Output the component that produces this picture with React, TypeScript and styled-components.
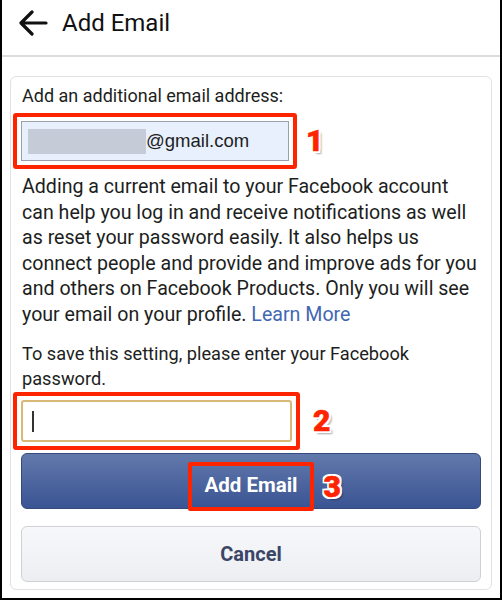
import React from "react";
import styled, { createGlobalStyle } from "styled-components";

const GlobalStyle = createGlobalStyle`
  html, body {
    margin: 0;
    padding: 0;
    background: #fff;
  }
  body {
    font-family: Roboto, "Liberation Sans", sans-serif;
  }
`;

const Frame = styled.div`
  width: 502px;
  height: 600px;
  box-sizing: border-box;
  border: 2px solid #000;
  border-top: none;
  display: flex;
  flex-direction: column;
  overflow: hidden;
`;

const Header = styled.div`
  height: 57px;
  flex-shrink: 0;
  display: flex;
  align-items: center;
  gap: 14px;
  padding-left: 16px;
  border-bottom: 2px solid #dcdcdc;
  box-sizing: border-box;
`;

const Title = styled.div`
  font-size: 24px;
  color: #111;
  padding-bottom: 10px;
`;

const Body = styled.div`
  padding: 19px 8px 10px 8px;
`;

const Card = styled.div`
  border: 1px solid #e2e2e2;
  border-radius: 6px;
  padding: 8px 10px 7px 11px;
  display: flex;
  flex-direction: column;
`;

const Label = styled.div`
  font-size: 18px;
  color: #1c1e21;
  line-height: 22px;
`;

const Row = styled.div<{ $top: number }>`
  display: flex;
  align-items: center;
  margin-top: ${(p) => p.$top}px;
`;

const Highlight = styled.div<{ $w: number; $h: number }>`
  width: ${(p) => p.$w}px;
  height: ${(p) => p.$h}px;
  box-sizing: border-box;
  border: 4px solid #ff2400;
  border-radius: 3px;
  margin-left: -9px;
  padding: 4px;
  display: flex;
`;

const EmailField = styled.div`
  flex: 1;
  background: #e8f0fe;
  border: 1px solid #9aa0a8;
  display: flex;
  align-items: center;
  padding-left: 6px;
  font-family: "Liberation Sans", Arial, sans-serif;
  font-size: 18.5px;
  color: #1c1e21;
`;

const Redacted = styled.span`
  display: inline-block;
  width: 118px;
  height: 25px;
  background: #c6ccd7;
`;

const PassField = styled.div`
  flex: 1;
  border: 2px solid #d8b877;
  border-radius: 3px;
  display: flex;
  align-items: center;
  padding-left: 9px;
`;

const Caret = styled.span`
  width: 2px;
  height: 21px;
  background: #333;
`;

const Step = styled.span<{ $left: number }>`
  margin-left: ${(p) => p.$left}px;
  font-family: Roboto, "Liberation Sans", sans-serif;
  font-weight: 900;
  font-size: 30px;
  line-height: 30px;
  color: #ff2400;
  -webkit-text-stroke: 0.6px #ff2400;
  text-shadow: 2px 0 0 #fff, -2px 0 0 #fff, 0 2px 0 #fff, 0 -2px 0 #fff,
    2px 2px 0 #fff, -2px -2px 0 #fff, 2px -2px 0 #fff, -2px 2px 0 #fff,
    3px 3px 2px rgba(0, 0, 0, 0.35);
`;

const OverStep = styled(Step)`
  position: absolute;
  left: 100%;
  top: 6px;
`;

const Paragraph = styled.p`
  margin: 5px 0 0 0;
  font-size: 19.6px;
  line-height: 25.5px;
  color: #1c1e21;
`;

const Link = styled.a`
  color: #4267b2;
  text-decoration: none;
`;

const Small = styled.p`
  margin: 14px 0 0 0;
  font-size: 18.2px;
  line-height: 25px;
  color: #1c1e21;
`;

const Button = styled.div<{ $primary?: boolean }>`
  margin: ${(p) => (p.$primary ? "3px" : "17px")} 0 0 -1px;
  height: 56px;
  box-sizing: border-box;
  border-radius: 6px;
  display: flex;
  justify-content: center;
  font-weight: 700;
  ${(p) =>
    p.$primary
      ? `
    align-items: flex-start;
    padding-top: 8px;
    font-size: 20.5px;
    background: linear-gradient(#6279ab, #3a5494);
    border: 1px solid #34497e;
    color: #fff;
  `
      : `
    align-items: center;
    font-size: 20px;
    background: linear-gradient(#f7f8fa, #eceef2);
    border: 1px solid #cfd1d5;
    color: #3b4566;
  `}
`;

const ButtonMark = styled.div`
  position: relative;
  border: 4px solid #ff2400;
  border-radius: 2px;
  height: 49px;
  box-sizing: border-box;
  padding: 0 12px 4px 12px;
  display: flex;
  align-items: center;
`;

const BackArrow = () => (
  <svg width="30" height="26" viewBox="0 0 30 26" style={{ marginBottom: 10 }}>
    <path
      d="M28 13H4M14 2L3 13l11 11"
      fill="none"
      stroke="#111"
      strokeWidth="3.2"
      strokeLinecap="round"
      strokeLinejoin="round"
    />
  </svg>
);

export default function App() {
  return (
    <>
      <GlobalStyle />
      <Frame>
        <Header>
          <BackArrow />
          <Title>Add Email</Title>
        </Header>
        <Body>
          <Card>
            <Label>Add an additional email address:</Label>
            <Row $top={6}>
              <Highlight $w={284} $h={56}>
                <EmailField>
                  <Redacted />
                  @gmail.com
                </EmailField>
              </Highlight>
              <Step $left={9}>1</Step>
            </Row>
            <Paragraph>
              Adding a current email to your Facebook account can help you log
              in and receive notifications as well as reset your password
              easily. It also helps us connect people and provide and improve
              ads for you and others on Facebook Products. Only you will see
              your email on your profile. <Link>Learn More</Link>
            </Paragraph>
            <Small>
              To save this setting, please enter your Facebook password.
            </Small>
            <Row $top={1}>
              <Highlight $w={287} $h={58}>
                <PassField>
                  <Caret />
                </PassField>
              </Highlight>
              <Step $left={13}>2</Step>
            </Row>
            <Button $primary>
              <ButtonMark>
                Add Email
                <OverStep $left={14}>3</OverStep>
              </ButtonMark>
            </Button>
            <Button>Cancel</Button>
          </Card>
        </Body>
      </Frame>
    </>
  );
}
